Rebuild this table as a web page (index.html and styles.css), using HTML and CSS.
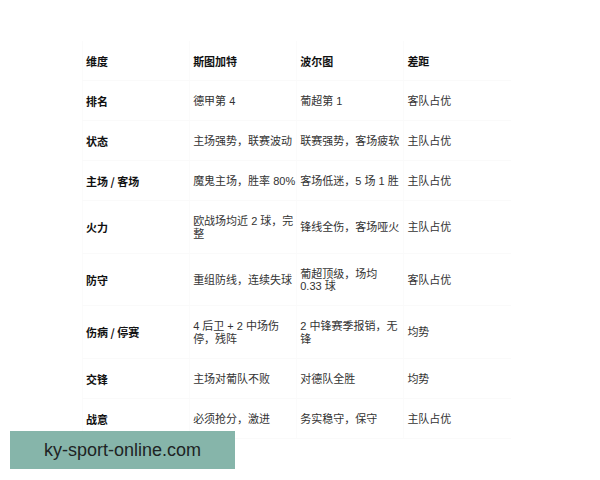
FILE: index.html
```html
<!DOCTYPE html>
<html lang="zh">
<head>
<meta charset="utf-8">
<link rel="stylesheet" href="styles.css">
</head>
<body>
<div class="page">
  <table class="cmp">
    <thead>
      <tr><th>维度</th><th>斯图加特</th><th>波尔图</th><th>差距</th></tr>
    </thead>
    <tbody>
      <tr><th>排名</th><td>德甲第 4</td><td>葡超第 1</td><td>客队占优</td></tr>
      <tr><th>状态</th><td>主场强势，联赛波动</td><td>联赛强势，客场疲软</td><td>主队占优</td></tr>
      <tr><th>主场 / 客场</th><td>魔鬼主场，胜率 80%</td><td>客场低迷，5 场 1 胜</td><td>主队占优</td></tr>
      <tr><th>火力</th><td>欧战场均近 2 球，完整</td><td>锋线全伤，客场哑火</td><td>主队占优</td></tr>
      <tr><th>防守</th><td>重组防线，连续失球</td><td>葡超顶级，场均 <span class="nb">0.33 球</span></td><td>客队占优</td></tr>
      <tr><th>伤病 / 停赛</th><td>4 后卫 + 2 中场伤<br>停，残阵</td><td>2 中锋赛季报销，无锋</td><td>均势</td></tr>
      <tr><th>交锋</th><td>主场对葡队不败</td><td>对德队全胜</td><td>均势</td></tr>
      <tr><th>战意</th><td>必须抢分，激进</td><td>务实稳守，保守</td><td>主队占优</td></tr>
    </tbody>
  </table>
  <div class="watermark">ky-sport-online.com</div>
</div>
</body>
</html>
```

FILE: styles.css
```css
html, body {
  margin: 0;
  padding: 0;
  background: #ffffff;
}
.page {
  position: relative;
  width: 600px;
  height: 480px;
  padding: 41px 0 0 82px;
  box-sizing: border-box;
}
.cmp {
  border-collapse: collapse;
  table-layout: fixed;
  width: 429px;
  font-family: "Liberation Sans", "Noto Sans CJK SC", sans-serif;
  font-size: 11px;
  line-height: 12.5px;
  color: #333333;
}
.cmp th, .cmp td {
  padding: 14px 0 12.5px 3px;
  text-align: left;
  vertical-align: middle;
  border-bottom: 1px solid #fafafa;
  border-left: 1px solid #fbfbfb;
}
.cmp th {
  font-family: "Noto Sans CJK SC", sans-serif;
  font-weight: 700;
  color: #111111;
}
.nb {
  white-space: nowrap;
}
.watermark {
  position: absolute;
  left: 10px;
  top: 431px;
  width: 225px;
  height: 38px;
  background: #86b5aa;
  color: #1e2424;
  font-family: "Liberation Sans", Arial, sans-serif;
  font-size: 18px;
  line-height: 38px;
  text-align: center;
}
```
